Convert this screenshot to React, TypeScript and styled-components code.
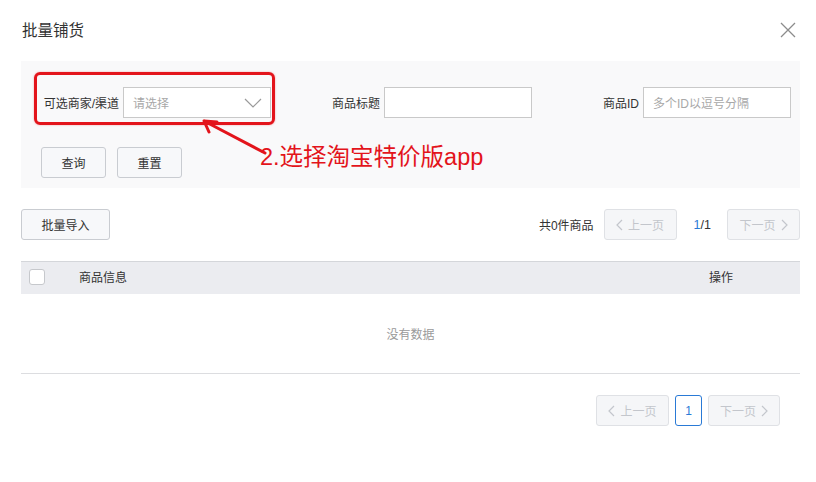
import styled, { createGlobalStyle } from "styled-components";

const GlobalStyle = createGlobalStyle`
  html, body {
    margin: 0;
    padding: 0;
    background: #fff;
  }
  body {
    font-family: "Liberation Sans", "Noto Sans CJK SC", sans-serif;
    color: #333;
  }
`;

const Dialog = styled.div`
  width: 816px;
  height: 482px;
  box-sizing: border-box;
  padding: 0 16px 0 21px;
  background: #fff;
`;

const Header = styled.div`
  height: 58px;
  display: flex;
  align-items: center;
  justify-content: space-between;
  margin-bottom: 3px;
`;

const Title = styled.div`
  font-size: 15.5px;
  color: #333;
  padding-left: 1px;
`;

const CloseButton = styled.div`
  width: 18px;
  height: 18px;
  margin: 2px 3px 0 0;
  display: flex;
  align-items: center;
  justify-content: center;
`;

const FilterPanel = styled.div`
  position: relative;
  background: #f9f9fa;
  padding: 26px 8px 10px 20px;
`;

const FieldRow = styled.div`
  display: flex;
  padding-left: 2px;
`;

const Field = styled.div<{ $offset?: number }>`
  position: relative;
  display: flex;
  align-items: center;
  gap: 4px;
  margin-left: ${(p) => p.$offset ?? 0}px;
`;

const Label = styled.span<{ $width: number }>`
  width: ${(p) => p.$width}px;
  font-size: 12px;
  color: #333;
  text-align: right;
  white-space: nowrap;
`;

const Input = styled.div`
  width: 148px;
  height: 31px;
  box-sizing: border-box;
  border: 1px solid #c9c9c9;
  background: #fff;
  display: flex;
  align-items: center;
  justify-content: space-between;
  padding: 0 8px 0 9px;
  font-size: 12px;
  color: #a8a8a8;
`;

const Highlight = styled.div`
  position: absolute;
  left: -9px;
  right: -4px;
  top: -15px;
  bottom: -7px;
  border: 3px solid #e3141b;
  border-radius: 6px;
  box-shadow: 0 0 2px rgba(227, 20, 27, 0.4);
  pointer-events: none;
`;

const ButtonRow = styled.div`
  display: flex;
  gap: 11px;
  margin-top: 29px;
`;

const Button = styled.div<{ $width?: number }>`
  width: ${(p) => p.$width ?? 65}px;
  height: 31px;
  box-sizing: border-box;
  border: 1px solid #c9ccd1;
  border-radius: 3px;
  background: #f7f8fa;
  display: flex;
  align-items: center;
  justify-content: center;
  font-size: 12px;
  color: #333;
`;

const Annotation = styled.div`
  position: absolute;
  left: 239px;
  top: 81px;
  font-size: 23.5px;
  line-height: 30px;
  color: #e3141b;
  white-space: nowrap;
`;

const Arrow = styled.svg`
  position: absolute;
  left: 178px;
  top: 56px;
  overflow: visible;
`;

const Toolbar = styled.div`
  display: flex;
  align-items: center;
  justify-content: space-between;
  margin-top: 21px;
`;

const Pager = styled.div<{ $gap?: number }>`
  display: flex;
  align-items: center;
  gap: ${(p) => p.$gap ?? 10}px;
`;

const Count = styled.span`
  font-size: 12px;
  color: #333;
`;

const PageButton = styled.div<{ $active?: boolean; $width?: number }>`
  width: ${(p) => p.$width ?? 73}px;
  height: 31px;
  box-sizing: border-box;
  border: 1px solid ${(p) => (p.$active ? "#2a7ad6" : "#dfe1e5")};
  border-radius: 3px;
  background: ${(p) => (p.$active ? "#fff" : "#f5f6f8")};
  display: flex;
  align-items: center;
  justify-content: center;
  gap: 5px;
  font-size: 12px;
  color: ${(p) => (p.$active ? "#2a7ad6" : "#c3c6cc")};
`;

const PageInfo = styled.span`
  font-size: 12.5px;
  color: #333;
  margin: 0 6px 0 7px;
`;

const CurrentPage = styled.span`
  color: #2a7ad6;
`;

const Table = styled.div`
  margin-top: 21px;
`;

const TableHead = styled.div`
  height: 33px;
  box-sizing: border-box;
  background: #ebecf0;
  border-top: 1px solid #d4d6da;
  display: flex;
  align-items: center;
  padding: 0 67px 3px 8px;
  font-size: 12px;
  color: #333;
`;

const Checkbox = styled.div`
  width: 16px;
  height: 16px;
  box-sizing: border-box;
  border: 1px solid #c6c8cc;
  border-radius: 3px;
  background: #fff;
`;

const HeadCell = styled.span<{ $grow?: boolean }>`
  flex: ${(p) => (p.$grow ? 1 : "none")};
  margin-left: ${(p) => (p.$grow ? 34 : 0)}px;
`;

const EmptyBody = styled.div`
  height: 80px;
  box-sizing: border-box;
  border-bottom: 1px solid #dcdde0;
  display: flex;
  align-items: center;
  justify-content: center;
  font-size: 12px;
  color: #9a9a9a;
`;

const Footer = styled.div`
  display: flex;
  justify-content: flex-end;
  padding-right: 20px;
  margin-top: 21px;
`;

const Chevron = ({ dir }: { dir: "left" | "right" }) => (
  <svg width="7" height="12" viewBox="0 0 7 12">
    <polyline
      points={dir === "left" ? "6,1 1,6 6,11" : "1,1 6,6 1,11"}
      fill="none"
      stroke="#c3c6cc"
      strokeWidth="1.2"
    />
  </svg>
);

const App = () => {
  return (
    <>
      <GlobalStyle />
      <Dialog>
        <Header>
          <Title>批量铺货</Title>
          <CloseButton>
            <svg width="16" height="16" viewBox="0 0 16 16">
              <path d="M1 1 L15 15 M15 1 L1 15" stroke="#8c8c8c" strokeWidth="1.3" />
            </svg>
          </CloseButton>
        </Header>

        <FilterPanel>
          <FieldRow>
            <Field>
              <Label $width={76}>可选商家/渠道</Label>
              <Input>
                请选择
                <svg width="18" height="10" viewBox="0 0 18 10">
                  <polyline points="1,1 9,9 17,1" fill="none" stroke="#9a9a9a" strokeWidth="1.2" />
                </svg>
              </Input>
              <Highlight />
            </Field>
            <Field $offset={61}>
              <Label $width={48}>商品标题</Label>
              <Input />
            </Field>
            <Field $offset={66}>
              <Label $width={41}>商品ID</Label>
              <Input>多个ID以逗号分隔</Input>
            </Field>
          </FieldRow>
          <ButtonRow>
            <Button>查询</Button>
            <Button>重置</Button>
          </ButtonRow>

          {/* 标注 */}
          <Arrow width="70" height="40" viewBox="0 0 70 40">
            <path
              d="M66 36 L7 5 M5 4 L18 5 M5 4 L10 15"
              fill="none"
              stroke="#e3141b"
              strokeWidth="3"
              strokeLinecap="round"
            />
          </Arrow>
          <Annotation>2.选择淘宝特价版app</Annotation>
        </FilterPanel>

        <Toolbar>
          <Button $width={89}>批量导入</Button>
          <Pager>
            <Count>共0件商品</Count>
            <PageButton>
              <Chevron dir="left" />
              上一页
            </PageButton>
            <PageInfo>
              <CurrentPage>1</CurrentPage>/1
            </PageInfo>
            <PageButton>
              下一页
              <Chevron dir="right" />
            </PageButton>
          </Pager>
        </Toolbar>

        <Table>
          <TableHead>
            <Checkbox />
            <HeadCell $grow>商品信息</HeadCell>
            <HeadCell>操作</HeadCell>
          </TableHead>
          <EmptyBody>没有数据</EmptyBody>
        </Table>

        <Footer>
          <Pager $gap={6}>
            <PageButton>
              <Chevron dir="left" />
              上一页
            </PageButton>
            <PageButton $active $width={27}>
              1
            </PageButton>
            <PageButton $width={72}>
              下一页
              <Chevron dir="right" />
            </PageButton>
          </Pager>
        </Footer>
      </Dialog>
    </>
  );
};

export default App;
